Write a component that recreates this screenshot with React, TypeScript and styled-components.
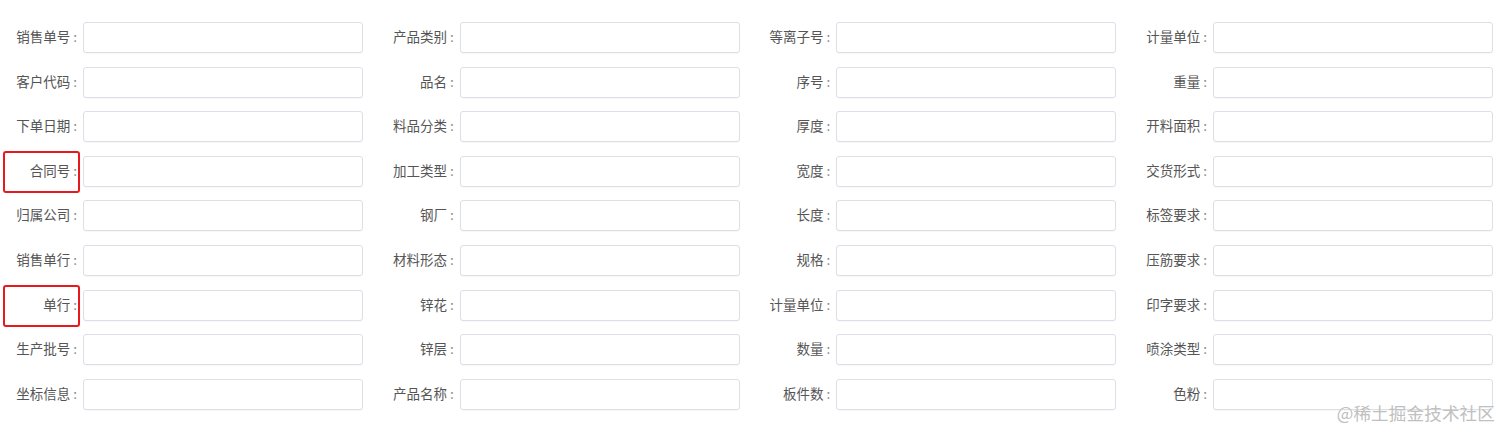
import React from "react";
import styled, { createGlobalStyle } from "styled-components";

const GlobalStyle = createGlobalStyle`
  html, body {
    margin: 0;
    padding: 0;
    background: #ffffff;
  }
  body {
    font-family: "Noto Sans CJK SC", "Noto Sans", "Liberation Sans", sans-serif;
  }
`;

const Page = styled.div`
  position: relative;
  width: 1512px;
  height: 438px;
  box-sizing: border-box;
  padding: 22px 19px 0 0;
  background: #fff;
  overflow: hidden;
`;

const Form = styled.form`
  display: grid;
  grid-template-columns: repeat(4, 363px);
  column-gap: 13.67px;
  row-gap: 13.6px;
`;

const Field = styled.div`
  display: grid;
  grid-template-columns: 83px 280px;
  align-items: center;
  height: 31px;
`;

const Label = styled.label`
  position: relative;
  display: flex;
  justify-content: flex-end;
  align-items: center;
  height: 31px;
  padding: 0 6px 3px 0;
  font-size: 13.5px;
  color: #555;
  white-space: nowrap;
  box-sizing: border-box;
`;

const Colon = styled.span`
  margin-left: 3px;
  color: #888;
`;

const Highlight = styled.span`
  position: absolute;
  left: 3px;
  right: 3px;
  top: -5px;
  bottom: -6px;
  border: 2.5px solid #e8191c;
  border-radius: 3px;
  pointer-events: none;
`;

const Input = styled.input`
  box-sizing: border-box;
  width: 280px;
  height: 31px;
  border: 1px solid #dcdfe6;
  border-radius: 3px;
  background: #fff;
  box-shadow: 0 1px 1px rgba(0, 0, 0, 0.03);
  outline: none;
  padding: 0 10px;
  font-size: 13px;
`;

const Watermark = styled.div`
  position: absolute;
  right: 17px;
  bottom: 15px;
  font-size: 17.5px;
  line-height: 20px;
  color: #c0c0c0;
  letter-spacing: 0.2px;
  font-family: "Noto Sans CJK SC", sans-serif;
`;

const columns: string[][] = [
  ["销售单号", "客户代码", "下单日期", "合同号", "归属公司", "销售单行", "单行", "生产批号", "坐标信息"],
  ["产品类别", "品名", "料品分类", "加工类型", "钢厂", "材料形态", "锌花", "锌层", "产品名称"],
  ["等离子号", "序号", "厚度", "宽度", "长度", "规格", "计量单位", "数量", "板件数"],
  ["计量单位", "重量", "开料面积", "交货形式", "标签要求", "压筋要求", "印字要求", "喷涂类型", "色粉"],
];

const highlighted = new Set(["0-3", "0-6"]);

export default function App() {
  const rows = columns[0].map((_, r) => columns.map((col) => col[r]));
  return (
    <>
      <GlobalStyle />
      <Page>
        <Form>
          {rows.map((row, r) =>
            row.map((label, c) => (
              <Field key={`${r}-${c}`}>
                <Label>
                  {label}
                  <Colon>:</Colon>
                  {highlighted.has(`${c}-${r}`) && <Highlight />}
                </Label>
                <Input type="text" />
              </Field>
            ))
          )}
        </Form>
        <Watermark>@稀土掘金技术社区</Watermark>
      </Page>
    </>
  );
}
